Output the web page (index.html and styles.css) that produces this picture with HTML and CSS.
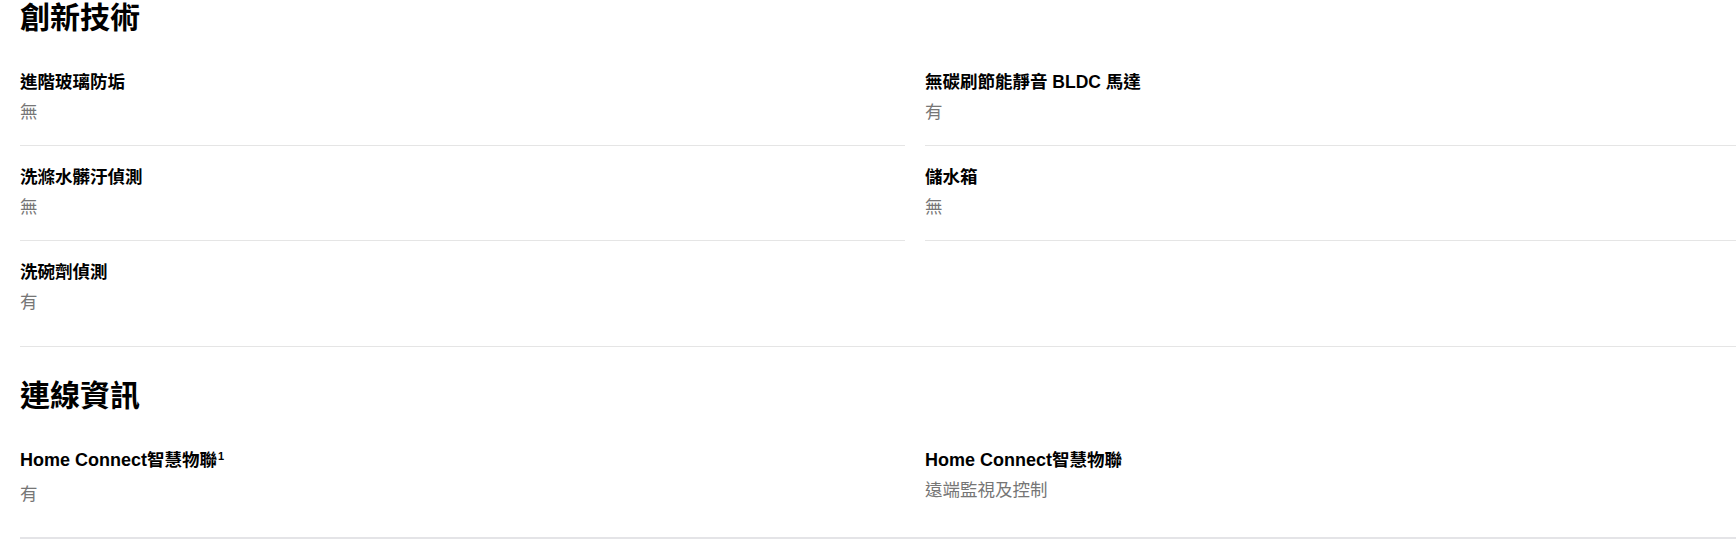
FILE: index.html
```html
<!DOCTYPE html>
<html lang="zh-Hant">
<head>
<meta charset="utf-8">
<title>規格</title>
<link rel="stylesheet" href="styles.css">
</head>
<body>
<main class="specs">
  <section class="spec-section spec-section--first">
    <h2 class="spec-title">創新技術</h2>
    <div class="spec-grid">
      <div class="spec-item">
        <div class="spec-label">進階玻璃防垢</div>
        <div class="spec-value">無</div>
      </div>
      <div class="spec-item">
        <div class="spec-label">無碳刷節能靜音 BLDC 馬達</div>
        <div class="spec-value">有</div>
      </div>
      <div class="spec-item">
        <div class="spec-label">洗滌水髒汙偵測</div>
        <div class="spec-value">無</div>
      </div>
      <div class="spec-item">
        <div class="spec-label">儲水箱</div>
        <div class="spec-value">無</div>
      </div>
      <div class="spec-item spec-item--last">
        <div class="spec-label">洗碗劑偵測</div>
        <div class="spec-value">有</div>
      </div>
    </div>
  </section>
  <section class="spec-section spec-section--second">
    <h2 class="spec-title">連線資訊</h2>
    <div class="spec-grid">
      <div class="spec-item spec-item--last">
        <div class="spec-label"><span class="spec-latin">Home Connect</span>智慧物聯<sup class="spec-sup">1</sup></div>
        <div class="spec-value">有</div>
      </div>
      <div class="spec-item spec-item--last">
        <div class="spec-label"><span class="spec-latin">Home Connect</span>智慧物聯</div>
        <div class="spec-value">遠端監視及控制</div>
      </div>
    </div>
  </section>
</main>
</body>
</html>
```
FILE: styles.css
```css
html, body {
  margin: 0;
  padding: 0;
  background: #ffffff;
  overflow: hidden;
}

body {
  font-family: "Liberation Sans", "Noto Sans CJK TC", "Noto Sans CJK SC", sans-serif;
  color: #000000;
}

.specs {
  width: 1790px;
  padding-left: 20px;
}

.spec-section {
  border-bottom: 1px solid #e5e5e5;
  padding-bottom: 11px;
}

.spec-section--second {
  margin-top: 31px;
  padding-bottom: 10px;
  border-bottom: 2px solid #e4e4e7;
}

.spec-title {
  margin: 0 0 15px;
  font-size: 30px;
  line-height: 36px;
  font-weight: 700;
}

.spec-grid {
  display: grid;
  grid-template-columns: 885px 885px;
  column-gap: 20px;
  align-items: start;
}

.spec-item {
  padding: 20px 0 22px;
  border-bottom: 1px solid #e5e5e5;
}

.spec-item--last {
  border-bottom: none;
}

.spec-label {
  font-size: 17.5px;
  line-height: 22px;
  font-weight: 700;
  color: #000000;
}

.spec-latin {
  font-size: 18px;
}

.spec-sup {
  display: inline-block;
  font-size: 11px;
  line-height: 12px;
  vertical-align: top;
  margin: 1px 0 13px 1px;
}

.spec-value {
  margin-top: 8px;
  font-size: 17.5px;
  line-height: 22px;
  font-weight: 400;
  color: #767676;
}
```
